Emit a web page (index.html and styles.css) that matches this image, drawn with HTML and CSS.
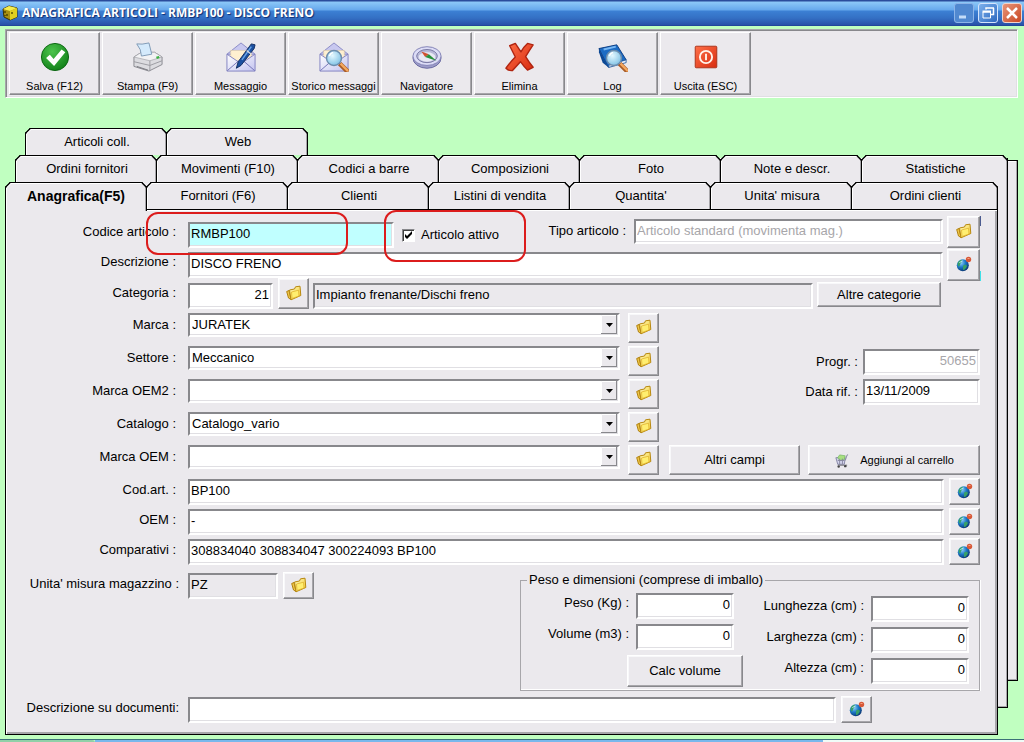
FILE: index.html
```html
<!DOCTYPE html>
<html lang="it">
<head>
<meta charset="utf-8">
<title>ANAGRAFICA ARTICOLI - RMBP100 - DISCO FRENO</title>
<link rel="stylesheet" href="styles.css">
</head>
<body>
<svg class="defs" aria-hidden="true">
  <defs>
    <linearGradient id="gold" x1="0" y1="0" x2="1" y2="1"><stop offset="0" stop-color="#fffbc0"/><stop offset="1" stop-color="#f4c828"/></linearGradient>
    <radialGradient id="earth" cx=".35" cy=".3" r=".75"><stop offset="0" stop-color="#8fd0f8"/><stop offset=".5" stop-color="#1c78c8"/><stop offset="1" stop-color="#0a3470"/></radialGradient>
    <radialGradient id="lens" cx=".4" cy=".35" r=".7"><stop offset="0" stop-color="#e4f8ff"/><stop offset="1" stop-color="#7cc0e4"/></radialGradient>
    <radialGradient id="ok" cx=".4" cy=".3" r=".8"><stop offset="0" stop-color="#4cc44c"/><stop offset="1" stop-color="#0c7a14"/></radialGradient>
    <linearGradient id="env" x1="0" y1="0" x2="1" y2="1"><stop offset="0" stop-color="#ffffff"/><stop offset="1" stop-color="#c4c4f0"/></linearGradient>
    <linearGradient id="red" x1="0" y1="0" x2="1" y2="1"><stop offset="0" stop-color="#ff7048"/><stop offset="1" stop-color="#d82c10"/></linearGradient>
    <symbol id="folder" viewBox="0 0 16 16">
      <path d="M.7 6.500 3 5.500 5 14.500 2.500 13z" fill="#f0c848" stroke="#b08010"/>
      <path d="M3.500 5 8.500 4 9.500 1.800 14 1.200 14.800 10.500 5 14.800z" fill="url(#gold)" stroke="#b8880f"/>
      <path d="M5.500 7 12.500 5.200 13 11 6 13.500z" fill="#ffee70" stroke="#dcae28" stroke-width=".7"/>
    </symbol>
    <symbol id="globe" viewBox="0 0 16 16">
      <circle cx="6.800" cy="9.200" r="6" fill="url(#earth)"/>
      <path d="M1.500 7.500C2.500 5 4 4 6 3.800 6 6 5 7 4 8c0 2-1 3-2 2zM7 10c2-2 3-1 4 0-1 2-2 4-4 4z" fill="#38a068"/>
      <path d="M3.500 7q1-2 3-2" stroke="#c8f0ff" fill="none"/>
      <circle cx="12.500" cy="3.500" r="2.700" fill="#d85838"/><path d="M11.500 2.500h2" stroke="#f4a080" fill="none"/>
    </symbol>
    <symbol id="envelope" viewBox="0 0 32 32">
      <path d="M1 13 16 1 31 13z" fill="#c8c8f0" stroke="#8888c4"/>
      <path d="M5 9h22v12H5z" fill="#fff0d0" stroke="#d8c4a0" stroke-width=".6"/>
      <path d="M1 13v18h30V13L19 21h-6z" fill="url(#env)" stroke="#8080c0"/>
      <path d="M1.500 30.500 13 20.500h6l11.500 10" fill="none" stroke="#7070b4"/>
    </symbol>
    <symbol id="magnifier" viewBox="0 0 32 32">
      <path d="m21 21 9 9" stroke="#a85c28" stroke-width="5"/><path d="m22 21 8 8" stroke="#f4a860" stroke-width="2.500"/>
      <circle cx="15" cy="15" r="8" fill="url(#lens)" stroke="#6c8cac" stroke-width="1.500"/>
      <path d="M10 13q1-3 4-4" fill="none" stroke="#fff" stroke-width="1.500"/>
    </symbol>
  </defs>
</svg>

<header class="titlebar">
  <svg class="app-icon" viewBox="0 0 16 16" aria-hidden="true">
    <path d="M1 4 7 1l8 2v9l-7 3-6-3z" fill="#a89010" stroke="#3a3000"/>
    <path d="M1 4 7 1l8 2-7 3z" fill="#f4ec50"/><path d="M8 6v9l7-3V3z" fill="#e0d020"/>
    <path d="M3 6v2M5 9v2M3 10v1M10 7v2" stroke="#3a3400" stroke-width="1.200"/>
  </svg>
  <h1 class="title">ANAGRAFICA ARTICOLI - RMBP100 - DISCO FRENO</h1>
  <div class="window-buttons">
    <button class="win-btn win-dim" type="button" aria-label="Riduci a icona"><svg viewBox="0 0 18 18"><path d="M4 13h7" stroke="#c4dcf8" stroke-width="3"/></svg></button>
    <button class="win-btn" type="button" aria-label="Ripristina"><svg viewBox="0 0 18 18" fill="none" stroke="#fff"><path d="M7 5.500V4h8M14.500 4v6.500H12" stroke-width="1.500"/><path d="M4 8h7.500v6H4z"/><path d="M3.500 7.500H12" stroke-width="2"/></svg></button>
    <button class="win-btn win-close" type="button" aria-label="Chiudi"><svg viewBox="0 0 18 18"><path d="m4 4 10 10M14 4 4 14" stroke="#fff" stroke-width="2.500"/></svg></button>
  </div>
</header>

<nav class="toolbar" aria-label="Comandi">
  <button class="tool" type="button"><svg viewBox="0 0 32 32"><circle cx="16" cy="16" r="14.500" fill="url(#ok)" stroke="#0a6410"/><path d="m6.500 17 4-3.500 4 4.500L23 8l4 3-12 14.500z" fill="#fff"/></svg>Salva (F12)</button>
  <button class="tool" type="button"><svg viewBox="0 0 32 32"><path d="M1 16 9 11h14l8 5v8L17 31 1 26z" fill="#dcdce0" stroke="#88888e"/><path d="M1 16 9 11h14l8 5-13 4z" fill="#f2f2f4" stroke="#a0a0a6" stroke-width=".7"/><path d="M4 2q5 1 13-1l3 12-11 2q0-7-5-13z" fill="#d4eafc" stroke="#7c98b4"/><path d="M1 21l17 4 13-5M18 20v11" fill="none" stroke="#9a9aa0"/><path d="m4 26 12 4" stroke="#78787e"/><path d="m25 17 3-1" stroke="#38b040" stroke-width="2.500"/></svg>Stampa (F9)</button>
  <button class="tool" type="button"><svg viewBox="0 0 32 32"><use href="#envelope"/><path d="m11 28 2-7L27 2l4 1-1 4-14 18z" fill="#1c50a0" stroke="#102c60"/><path d="m17 19 10-14" stroke="#6ca8e8" stroke-width="1.500"/><path d="m22 9 5 4" stroke="#d8d8e0" stroke-width="1.500"/></svg>Messaggio</button>
  <button class="tool" type="button"><svg viewBox="0 0 32 32"><use href="#envelope"/><use href="#magnifier" x="1" y="2"/></svg>Storico messaggi</button>
  <button class="tool" type="button"><svg viewBox="0 0 32 32"><ellipse cx="16" cy="17" rx="15" ry="11" fill="#9c9cc8" stroke="#6868a0"/><ellipse cx="16" cy="15" rx="15" ry="10" fill="#dcdcf6" stroke="#8080b4"/><ellipse cx="16" cy="15" rx="11" ry="7" fill="#b8b8d8" stroke="#7474a0"/><ellipse cx="16" cy="16" rx="9" ry="5" fill="#e8e8f4"/><path d="m10 10 8 3-4 3z" fill="#d05030"/><path d="m18 13 8 7-12-4z" fill="#28903c"/></svg>Navigatore</button>
  <button class="tool" type="button"><svg viewBox="0 0 32 32"><path d="M5 4 11 1.500Q14 6 17 10.500 20 5 24 1.500L30 3Q26 9 22 15.500 26 22 30 27L24 30Q20 26 16.500 21 12 26 8 30.500 4 31 1 28 6 21 11 16 8 10 5 4z" fill="url(#red)" stroke="#b02410" stroke-width="1.500" stroke-linejoin="round"/></svg>Elimina</button>
  <button class="tool" type="button"><svg viewBox="0 0 32 32"><path d="m1 7 19-4 10 16-19 8z" fill="#1c6cc4" stroke="#0c3c80"/><path d="m11 25 19-6v3l-18 5z" fill="#e8f0fc" stroke="#0c4894" stroke-width=".8"/><path d="M1 7 11 27l-6-5L1 11z" fill="#0c4894"/><path d="m6 8 13-3" stroke="#78b8f4" stroke-width="2"/><use href="#magnifier" x="2" y="2"/></svg>Log</button>
  <button class="tool" type="button"><svg viewBox="0 0 32 32"><rect x="4.500" y="4.500" width="23" height="23" rx="1" fill="url(#red)" stroke="#a83018"/><circle cx="16" cy="16" r="6.500" fill="none" stroke="#fff4ec" stroke-width="2"/><path d="M16 12.500v7" stroke="#fff4ec" stroke-width="2"/></svg>Uscita (ESC)</button>
</nav>

<main class="book">
  <div class="sheet sheet-back"></div>
  <div class="sheet sheet-middle"></div>
  <div class="front">
    <div class="tabs tabs-top">
      <button class="tab" type="button">Articoli coll.</button>
      <button class="tab" type="button">Web</button>
    </div>
    <div class="tabs tabs-middle">
      <button class="tab" type="button">Ordini fornitori</button>
      <button class="tab" type="button">Movimenti (F10)</button>
      <button class="tab" type="button">Codici a barre</button>
      <button class="tab" type="button">Composizioni</button>
      <button class="tab" type="button">Foto</button>
      <button class="tab" type="button">Note e descr.</button>
      <button class="tab" type="button">Statistiche</button>
    </div>
    <div class="tabs tabs-front">
      <button class="tab tab-active" type="button">Anagrafica(F5)</button>
      <button class="tab" type="button">Fornitori (F6)</button>
      <button class="tab" type="button">Clienti</button>
      <button class="tab" type="button">Listini di vendita</button>
      <button class="tab" type="button">Quantita'</button>
      <button class="tab" type="button">Unita' misura</button>
      <button class="tab" type="button">Ordini clienti</button>
    </div>

    <form class="panel">
      <div class="mark mark-code" aria-hidden="true"></div>
      <div class="mark mark-active" aria-hidden="true"></div>

      <section class="head">
        <div class="head-rows">
          <div class="row row-code">
            <label class="label" for="codice">Codice articolo :</label>
            <input class="field field-code" id="codice" value="RMBP100">
            <span class="check"><input class="box" type="checkbox" id="attivo" checked><label for="attivo">Articolo attivo</label></span>
            <label class="label-type" for="tipo">Tipo articolo :</label>
            <input class="field field-type" id="tipo" value="Articolo standard (movimenta mag.)" disabled>
          </div>
          <div class="row row-desc">
            <label class="label" for="descrizione">Descrizione :</label>
            <input class="field grow" id="descrizione" value="DISCO FRENO">
          </div>
          <div class="row row-category">
            <label class="label" for="categoria">Categoria :</label>
            <input class="field field-cat number" id="categoria" value="21">
            <button class="btn icon-btn tall" type="button" aria-label="Scegli categoria"><svg><use href="#folder"/></svg></button>
            <input class="field grow readonly" aria-label="Nome categoria" value="Impianto frenante/Dischi freno" readonly>
            <button class="btn btn-category" type="button">Altre categorie</button>
          </div>
        </div>
        <div class="head-buttons">
          <button class="btn icon-btn" type="button" aria-label="Scegli tipo"><svg><use href="#folder"/></svg></button>
          <button class="btn icon-btn" type="button" aria-label="Traduci descrizione"><svg><use href="#globe"/></svg></button>
        </div>
      </section>

      <section class="middle">
        <div class="combos">
          <div class="row"><label class="label" for="marca">Marca :</label><select class="field combo grow" id="marca"><option>JURATEK</option></select><button class="btn icon-btn" type="button" aria-label="Apri marca"><svg><use href="#folder"/></svg></button></div>
          <div class="row"><label class="label" for="settore">Settore :</label><select class="field combo grow" id="settore"><option>Meccanico</option></select><button class="btn icon-btn" type="button" aria-label="Apri settore"><svg><use href="#folder"/></svg></button></div>
          <div class="row"><label class="label" for="oem2">Marca OEM2 :</label><select class="field combo grow" id="oem2"><option></option></select><button class="btn icon-btn" type="button" aria-label="Apri marca OEM2"><svg><use href="#folder"/></svg></button></div>
          <div class="row"><label class="label" for="catalogo">Catalogo :</label><select class="field combo grow" id="catalogo"><option>Catalogo_vario</option></select><button class="btn icon-btn" type="button" aria-label="Apri catalogo"><svg><use href="#folder"/></svg></button></div>
          <div class="row"><label class="label" for="marcaoem">Marca OEM :</label><select class="field combo grow" id="marcaoem"><option></option></select><button class="btn icon-btn" type="button" aria-label="Apri marca OEM"><svg><use href="#folder"/></svg></button></div>
        </div>
        <div class="side">
          <div class="side-fields">
            <label for="progr">Progr. :</label><input class="field number" id="progr" value="50655" disabled>
            <label for="data">Data rif. :</label><input class="field" id="data" value="13/11/2009">
          </div>
          <div class="side-buttons">
            <button class="btn btn-fields" type="button">Altri campi</button>
            <button class="btn btn-cart" type="button"><svg viewBox="0 0 16 16"><path d="M2 5h10l-1 7H4z" fill="#d4d4ec" stroke="#8484a4"/><path d="M4 5 6 2l6 1-1 4-5 1z" fill="#a8e080" stroke="#60a850" stroke-width=".6"/><path d="M12 8l2-6h1M4 8h7M6 6v6M9 6v6" fill="none" stroke="#8888a0"/><path d="M4 13h10" stroke="#66666e"/><circle cx="5" cy="14.500" r="1.300" fill="#444"/><circle cx="12" cy="14" r="1.300" fill="#444"/></svg>Aggiungi al carrello</button>
          </div>
        </div>
      </section>

      <section class="codes">
        <div class="row"><label class="label" for="codart">Cod.art. :</label><input class="field grow" id="codart" value="BP100"><button class="btn icon-btn" type="button" aria-label="Traduci codice"><svg><use href="#globe"/></svg></button></div>
        <div class="row"><label class="label" for="oem">OEM :</label><input class="field grow" id="oem" value="-"><button class="btn icon-btn" type="button" aria-label="Traduci OEM"><svg><use href="#globe"/></svg></button></div>
        <div class="row"><label class="label" for="comparativi">Comparativi :</label><input class="field grow" id="comparativi" value="308834040 308834047 300224093 BP100"><button class="btn icon-btn" type="button" aria-label="Traduci comparativi"><svg><use href="#globe"/></svg></button></div>
      </section>

      <section class="measures">
        <div class="row">
          <label class="label" for="unita">Unita' misura magazzino :</label>
          <input class="field field-unit readonly" id="unita" value="PZ" readonly>
          <button class="btn icon-btn" type="button" aria-label="Scegli unita'"><svg><use href="#folder"/></svg></button>
        </div>
        <fieldset class="weights">
          <legend>Peso e dimensioni (comprese di imballo)</legend>
          <div class="weights-body">
            <div class="weights-left">
              <div class="pairs pairs-left">
                <label for="peso">Peso (Kg) :</label><input class="field number" id="peso" value="0">
                <label for="volume">Volume (m3) :</label><input class="field number" id="volume" value="0">
              </div>
              <button class="btn btn-calc" type="button">Calc volume</button>
            </div>
            <div class="pairs">
              <label for="lunghezza">Lunghezza (cm) :</label><input class="field number" id="lunghezza" value="0">
              <label for="larghezza">Larghezza (cm) :</label><input class="field number" id="larghezza" value="0">
              <label for="altezza">Altezza (cm) :</label><input class="field number" id="altezza" value="0">
            </div>
          </div>
        </fieldset>
      </section>

      <div class="row row-docs">
        <label class="label label-wide" for="documenti">Descrizione su documenti:</label>
        <input class="field grow" id="documenti" value="">
        <button class="btn icon-btn" type="button" aria-label="Traduci descrizione documenti"><svg><use href="#globe"/></svg></button>
      </div>
    </form>
  </div>
</main>
<footer class="taskbar"><div class="start"></div><div class="tasks"></div><div class="rest"></div></footer>
</body>
</html>
```
FILE: styles.css
```css
:root {
  --face: #ebe9ed;
  --shade: #88888c;
  --mid: #a7a6aa;
  --soft: #e0dfe3;
}
* { box-sizing: border-box; }
body {
  margin: 0;
  min-height: 100vh;
  display: flex;
  flex-direction: column;
  background: #c0ffc0;
  color: #000;
  font: 13px/20px "Liberation Sans", Arial, sans-serif;
}
button, input, select { font: inherit; color: inherit; margin: 0; }
.defs { display: block; width: 0; height: 0; position: absolute; }

/* Title bar */
.titlebar {
  display: flex;
  align-items: center;
  gap: 4px;
  height: 26px;
  padding: 0 2px;
  background: linear-gradient(#2a4c9c 0 1px, #8cc8f8 2px, #66a8ec 10px, #3c80d4 11px, #3470c4 18px, #2850a8 25px, #1c3c8c);
}
.app-icon { width: 16px; height: 16px; }
.title {
  flex: 1;
  margin: 0;
  color: #fff;
  font: 700 12px/20px "Open Sans", "Noto Sans", sans-serif;
  text-shadow: 1px 1px 1px #102c70;
}
.window-buttons { display: flex; gap: 4px; }
.win-btn {
  width: 20px;
  height: 20px;
  padding: 0;
  border: 1px solid #d4e4fc;
  border-radius: 3px;
  background: linear-gradient(135deg, #7cb0ec, #2c68c0);
}
.win-btn svg { display: block; width: 18px; height: 18px; }
.win-dim { border-color: #8cb4e8; background: #5088d0; }
.win-close { background: linear-gradient(135deg, #e89478, #c84824); border-color: #f0d4cc; }

/* Toolbar */
.toolbar {
  display: flex;
  gap: 2px;
  margin: 3px 6px 0 5px;
  padding: 2px 3px;
  background: var(--face);
  border: 1px solid #fff;
  border-color: var(--mid) #fff #fff var(--mid);
  box-shadow: inset 1px 1px var(--shade), inset -1px -1px var(--soft);
}
.tool {
  display: flex;
  flex-direction: column;
  align-items: center;
  gap: 6px;
  width: 91px;
  height: 63px;
  padding: 9px 0 0;
  border: 1px solid;
  border-color: #fff var(--shade) var(--shade) #fff;
  box-shadow: inset -1px -1px var(--mid);
  background: var(--face);
  font-size: 11px;
  line-height: 16px;
  white-space: nowrap;
}
.tool svg { width: 30px; height: 30px; }

/* Stacked sheets */
.book { display: grid; margin: 30px 6px 0 5px; }
.sheet {
  grid-area: 1 / 1;
  background: var(--face);
  border: 1px solid #000;
  box-shadow: inset -1px -1px var(--mid), inset 0 1px #fff;
}
.sheet-back { margin: 32px 0 54px 40px; }
.sheet-middle { margin: 30px 10px 27px 40px; border-top: 0; }
.front { grid-area: 1 / 1; min-width: 0; }
.tabs { display: flex; }
.tabs-top { margin-left: 20px; }
.tabs-middle { margin: 0 10px; }
.tabs-front { margin-right: 20px; }
.tab {
  flex: 0 0 142px;
  height: 27px;
  margin-right: -1px;
  padding: 0 0 0 2px;
  border: 1px solid #000;
  border-bottom: 0;
  border-radius: 5px 5px 0 0;
  corner-shape: bevel;
  background: var(--face);
  box-shadow: inset 1px 1px #fff, inset -1px 0 var(--mid);
}
.tabs-middle .tab:last-child, .tabs-front .tab:last-child { flex: 1; margin-right: 0; }
.tab-active {
  z-index: 1;
  height: 29px;
  margin-bottom: -2px;
  padding: 0 0 2px;
  font-size: 14px;
  font-weight: 700;
}

/* Form page */
.panel {
  position: relative;
  margin-right: 20px;
  padding: 6px 16px 11px 17px;
  background: var(--face);
  border: 1px solid #000;
  box-shadow: inset 1px 1px #fff, inset -2px -2px var(--mid);
}
.mark {
  position: absolute;
  z-index: 1;
  border: 2px solid #dc1c1c;
  border-radius: 12px;
  pointer-events: none;
}
.mark-code { left: 140px; top: 2px; width: 202px; height: 43px; }
.mark-active { left: 378px; top: 0; width: 142px; height: 52px; }

.row { display: flex; align-items: center; }
.label { flex: 0 0 153px; margin-right: 12px; padding-bottom: 4px; text-align: right; white-space: nowrap; }
.grow { flex: 1; }
.field {
  min-width: 0;
  height: 26px;
  padding: 0 2px 3px 1px;
  border: 2px solid;
  border-color: var(--shade) #fff #fff var(--shade);
  border-radius: 0;
  background: #fff;
  box-shadow: inset -1px -1px var(--soft);
  outline: 0;
}
.field:disabled { color: #a7a6aa; background: #fff; opacity: 1; }
.number { text-align: right; padding-right: 2px; }
.readonly { background: var(--face); }
.btn {
  padding: 0;
  border: 1px solid;
  border-color: #fff var(--shade) var(--shade) #fff;
  border-radius: 0;
  background: var(--face);
  box-shadow: inset -1px -1px var(--mid), inset 1px 1px #f8f8fa;
  white-space: nowrap;
}
.icon-btn { display: grid; place-items: center; flex: 0 0 31px; height: 27px; padding-bottom: 2px; }
.icon-btn svg { width: 16px; height: 16px; }

.head { display: flex; gap: 4px; }
.head-rows { flex: 1; min-width: 0; padding-top: 3px; }
.head-buttons {
  display: grid;
  grid-template-rows: 32px 32px;
  gap: 1px;
  align-self: start;
  padding-right: 1px;
  background: linear-gradient(#4c5c90 0 10px, var(--face) 10px 55px, #40e0e8 55px);
}
.head-buttons .icon-btn { width: 33px; height: 32px; }
.row-code { align-items: end; height: 29px; }
.row-code .label { padding-bottom: 6px; }
.field-code { width: 206px; background: #c0ffff; }
.check { display: flex; align-items: center; gap: 6px; margin-left: 8px; padding-bottom: 3px; }
.box {
  appearance: none;
  width: 13px;
  height: 13px;
  border: 1px solid;
  border-color: var(--shade) #fff #fff var(--shade);
  box-shadow: inset 1px 1px #404040;
  background: #fff url("data:image/svg+xml,%3Csvg xmlns='http://www.w3.org/2000/svg' viewBox='0 0 11 11'%3E%3Cpath d='M2 4v3l2 2 5-5V1L4 6z'/%3E%3C/svg%3E");
}
.label-type { margin: 0 8px 0 auto; padding-bottom: 7px; }
.field-type { width: 309px; height: 25px; align-self: start; }
.row-desc { margin-top: 4px; }
.row-desc .label { padding-bottom: 6px; }
.row-category { align-items: end; }
.row-category .label { padding-bottom: 6px; }
.field-cat { width: 85px; }
.tall { height: 31px; margin: 0 4px 0 5px; }
.btn-category { width: 124px; height: 25px; margin: 0 2px 2px 4px; }

.middle { display: flex; gap: 10px; margin-top: 4px; padding-right: 1px; }
.combos { flex: 1; display: grid; gap: 3px; }
.combos .row { align-items: start; }
.combos .label { padding: 2px 0 0; }
.combos .icon-btn { height: 30px; margin-left: 8px; }
.combo {
  appearance: none;
  height: 24px;
  padding: 0 20px 0 2px;
  background: #fff url("data:image/svg+xml,%3Csvg xmlns='http://www.w3.org/2000/svg' width='17' height='20'%3E%3Cpath fill='%23ebe9ed' d='M0 0h17v20H0z'/%3E%3Cpath fill='none' stroke='%23fff' d='M.5 19V.5H16'/%3E%3Cpath fill='none' stroke='%2388888c' stroke-width='2' d='M16 0v19H0'/%3E%3Cpath d='M5 8h7l-3.500 4z'/%3E%3C/svg%3E") right top no-repeat;
}
.side { flex: 0 0 311px; display: flex; flex-direction: column; justify-content: space-between; padding-top: 36px; }
.side-fields { display: grid; grid-template-columns: auto 117px; gap: 4px 5px; justify-content: end; align-items: center; text-align: right; }
.side-buttons { display: flex; justify-content: space-between; }
.btn-fields { width: 131px; height: 30px; }
.btn-cart { display: flex; align-items: center; justify-content: center; gap: 11px; width: 172px; height: 30px; font-size: 11px; }
.btn-cart svg { width: 15px; height: 15px; }

.codes { display: grid; gap: 3px; margin-top: 3px; padding-right: 1px; }
.codes .icon-btn, .row-docs .icon-btn, .measures .icon-btn { margin-left: 5px; }

.measures { display: flex; justify-content: space-between; align-items: start; margin-top: 7px; padding-right: 1px; }
.field-unit { width: 90px; }
.measures .label, .label-wide { flex-basis: 156px; margin-right: 9px; }
.weights {
  flex: 0 0 460px;
  margin: 0;
  padding: 0 10px 3px 0;
  border: 1px solid var(--mid);
  box-shadow: inset 0 -1px #fff, 1px 0 #fff;
}
.weights legend { margin-left: 6px; padding: 0 2px; line-height: 16px; }
.weights-body { display: flex; justify-content: space-between; }
.weights-left { display: flex; flex-direction: column; align-items: end; gap: 5px; width: 222px; padding-top: 5px; }
.pairs { display: grid; grid-template-columns: auto 98px; gap: 5px 7px; align-content: start; padding-top: 8px; text-align: right; }
.pairs-left { padding: 0 9px 0 0; }
.btn-calc { width: 116px; height: 32px; }
.row-docs { margin-top: 5px; padding-right: 109px; }

/* Sliver of the system bar */
.taskbar { display: flex; height: 4px; margin-top: 4px; border-top: 1px solid #3c7078; }
.start { flex: 0 0 95px; background: #90d0a8; border-radius: 0 3px 0 0; }
.tasks { flex: 0 0 728px; background: #78b8ec; }
.rest { flex: 1; background: #f0fcf8; }
```
